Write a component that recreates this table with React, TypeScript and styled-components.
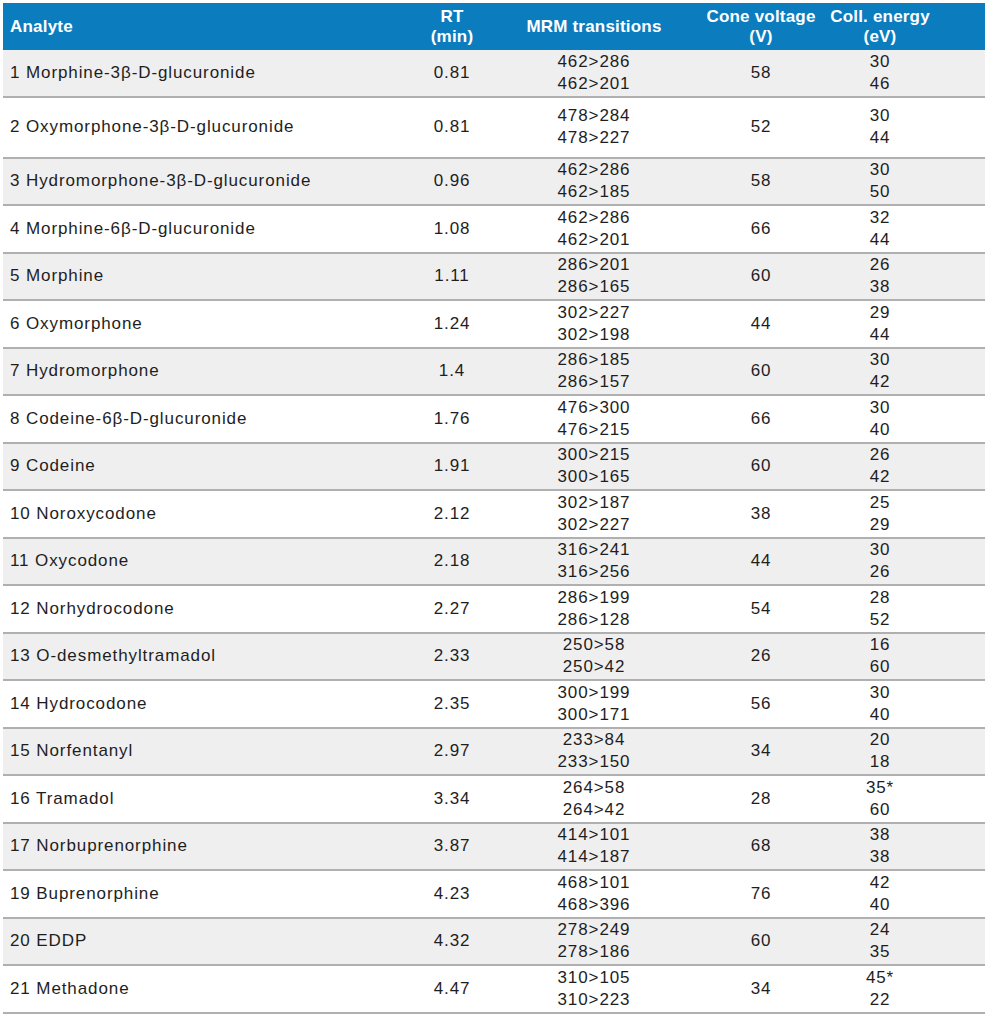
import React from "react";
import styled, { createGlobalStyle } from "styled-components";

const Global = createGlobalStyle`
  html, body {
    margin: 0;
    padding: 0;
    background: #ffffff;
  }
  body {
    font-family: "Liberation Sans", Arial, sans-serif;
    color: #1e1e1e;
  }
`;

const Table = styled.div`
  margin: 3px 0 0 3px;
  width: 982px;
`;

const COLS = "397px 104px 180px 154px 84px 1fr";

const Head = styled.div`
  display: grid;
  grid-template-columns: ${COLS};
  height: 47px;
  background: #0b7dbf;
  color: #ffffff;
  font-weight: 700;
  font-size: 17px;
  letter-spacing: 0.2px;
  line-height: 20px;
`;

const HeadCell = styled.div<{ $left?: boolean }>`
  display: flex;
  flex-direction: column;
  justify-content: center;
  align-items: ${({ $left }) => ($left ? "flex-start" : "center")};
  padding-left: ${({ $left }) => ($left ? "7px" : "0")};
  text-align: center;
  white-space: nowrap;
`;

const Row = styled.div<{ $shade: boolean; $tall?: boolean }>`
  display: grid;
  grid-template-columns: ${COLS};
  box-sizing: border-box;
  height: ${({ $tall }) => ($tall ? "61px" : "47.5px")};
  background: ${({ $shade }) => ($shade ? "#f0eff0" : "#ffffff")};
  border-bottom: 2px solid #b0b0b0;
  font-size: 17px;
  letter-spacing: 0.9px;
  line-height: 22px;
`;

const Cell = styled.div<{ $left?: boolean }>`
  display: flex;
  flex-direction: column;
  justify-content: center;
  align-items: ${({ $left }) => ($left ? "flex-start" : "center")};
  padding-left: ${({ $left }) => ($left ? "7px" : "0")};
  white-space: nowrap;
`;

type R = {
  name: string;
  rt: string;
  mrm: [string, string];
  cone: string;
  ce: [string, string];
  tall?: boolean;
};

const rows: R[] = [
  { name: "1 Morphine-3β-D-glucuronide", rt: "0.81", mrm: ["462>286", "462>201"], cone: "58", ce: ["30", "46"] },
  { name: "2 Oxymorphone-3β-D-glucuronide", rt: "0.81", mrm: ["478>284", "478>227"], cone: "52", ce: ["30", "44"], tall: true },
  { name: "3 Hydromorphone-3β-D-glucuronide", rt: "0.96", mrm: ["462>286", "462>185"], cone: "58", ce: ["30", "50"] },
  { name: "4 Morphine-6β-D-glucuronide", rt: "1.08", mrm: ["462>286", "462>201"], cone: "66", ce: ["32", "44"] },
  { name: "5 Morphine", rt: "1.11", mrm: ["286>201", "286>165"], cone: "60", ce: ["26", "38"] },
  { name: "6 Oxymorphone", rt: "1.24", mrm: ["302>227", "302>198"], cone: "44", ce: ["29", "44"] },
  { name: "7 Hydromorphone", rt: "1.4", mrm: ["286>185", "286>157"], cone: "60", ce: ["30", "42"] },
  { name: "8 Codeine-6β-D-glucuronide", rt: "1.76", mrm: ["476>300", "476>215"], cone: "66", ce: ["30", "40"] },
  { name: "9 Codeine", rt: "1.91", mrm: ["300>215", "300>165"], cone: "60", ce: ["26", "42"] },
  { name: "10 Noroxycodone", rt: "2.12", mrm: ["302>187", "302>227"], cone: "38", ce: ["25", "29"] },
  { name: "11 Oxycodone", rt: "2.18", mrm: ["316>241", "316>256"], cone: "44", ce: ["30", "26"] },
  { name: "12 Norhydrocodone", rt: "2.27", mrm: ["286>199", "286>128"], cone: "54", ce: ["28", "52"] },
  { name: "13 O-desmethyltramadol", rt: "2.33", mrm: ["250>58", "250>42"], cone: "26", ce: ["16", "60"] },
  { name: "14 Hydrocodone", rt: "2.35", mrm: ["300>199", "300>171"], cone: "56", ce: ["30", "40"] },
  { name: "15 Norfentanyl", rt: "2.97", mrm: ["233>84", "233>150"], cone: "34", ce: ["20", "18"] },
  { name: "16 Tramadol", rt: "3.34", mrm: ["264>58", "264>42"], cone: "28", ce: ["35*", "60"] },
  { name: "17 Norbuprenorphine", rt: "3.87", mrm: ["414>101", "414>187"], cone: "68", ce: ["38", "38"] },
  { name: "19 Buprenorphine", rt: "4.23", mrm: ["468>101", "468>396"], cone: "76", ce: ["42", "40"] },
  { name: "20 EDDP", rt: "4.32", mrm: ["278>249", "278>186"], cone: "60", ce: ["24", "35"] },
  { name: "21 Methadone", rt: "4.47", mrm: ["310>105", "310>223"], cone: "34", ce: ["45*", "22"] },
];

export default function App() {
  return (
    <>
      <Global />
      <Table>
        <Head>
          <HeadCell $left>Analyte</HeadCell>
          <HeadCell>
            <span>RT</span>
            <span>(min)</span>
          </HeadCell>
          <HeadCell>MRM transitions</HeadCell>
          <HeadCell>
            <span>Cone voltage</span>
            <span>(V)</span>
          </HeadCell>
          <HeadCell>
            <span>Coll. energy</span>
            <span>(eV)</span>
          </HeadCell>
          <div />
        </Head>
        {rows.map((r, i) => (
          <Row key={r.name} $shade={i % 2 === 0} $tall={r.tall}>
            <Cell $left>{r.name}</Cell>
            <Cell>{r.rt}</Cell>
            <Cell>
              <span>{r.mrm[0]}</span>
              <span>{r.mrm[1]}</span>
            </Cell>
            <Cell>{r.cone}</Cell>
            <Cell>
              <span>{r.ce[0]}</span>
              <span>{r.ce[1]}</span>
            </Cell>
            <div />
          </Row>
        ))}
      </Table>
    </>
  );
}
